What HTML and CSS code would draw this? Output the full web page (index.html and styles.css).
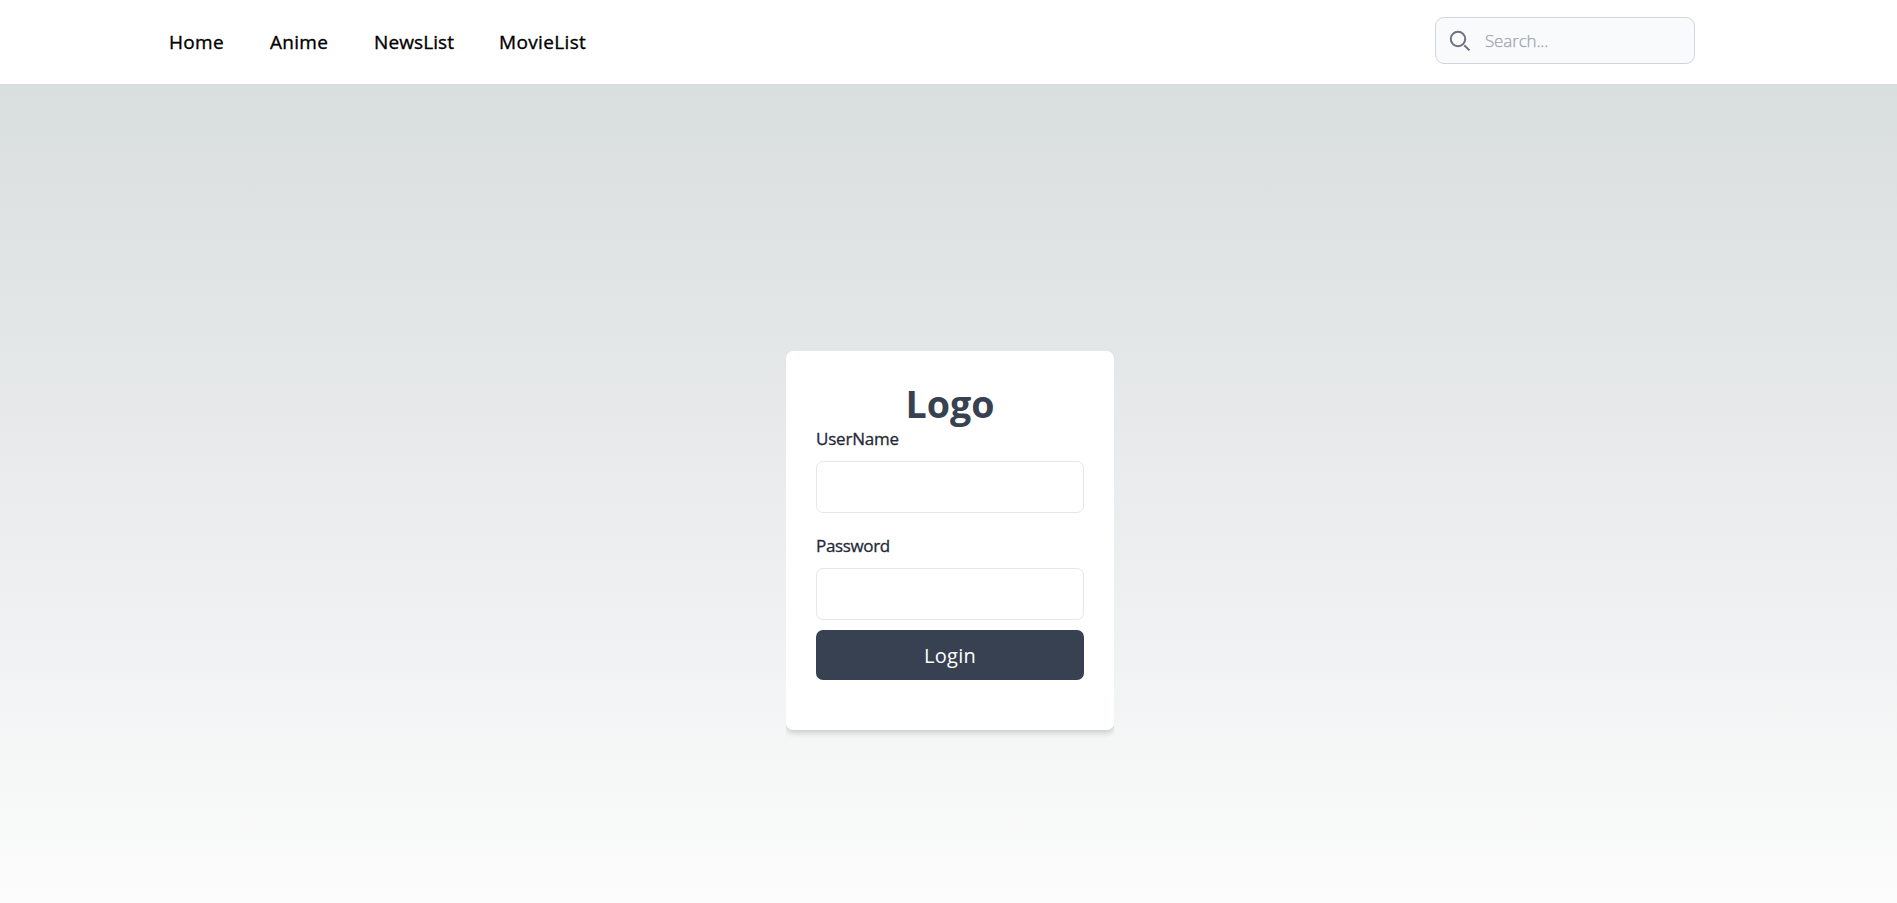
FILE: index.html
```html
<!DOCTYPE html>
<html lang="en">
<head>
<meta charset="utf-8">
<title>Login</title>
<link rel="stylesheet" href="styles.css">
</head>
<body>
<header class="header">
  <nav class="nav">
    <a class="nav-link home">Home</a>
    <a class="nav-link anime">Anime</a>
    <a class="nav-link news">NewsList</a>
    <a class="nav-link movie">MovieList</a>
  </nav>
  <label class="search">
    <svg class="search-icon" viewBox="0 0 22 22" fill="none" stroke="#6b7280" stroke-width="2"><circle cx="9" cy="9" r="7.2"/><path d="M15.2 15.2l5.3 5.2"/></svg>
    <input class="search-input" type="text" placeholder="Search...">
  </label>
</header>
<main class="main">
  <form class="card">
    <h1 class="logo">Logo</h1>
    <label class="label" for="user">UserName</label>
    <input class="field" id="user" type="text">
    <label class="label second" for="pass">Password</label>
    <input class="field" id="pass" type="password">
    <button class="button" type="button">Login</button>
  </form>
</main>
</body>
</html>
```
FILE: styles.css
```css
* { box-sizing: border-box; margin: 0; }
body {
  height: 903px;
  display: flex;
  flex-direction: column;
  overflow: hidden;
  font-family: "Open Sans", "Noto Sans", sans-serif;
}
.header {
  height: 84px;
  flex: none;
  display: flex;
  align-items: center;
  justify-content: space-between;
  padding: 0 202px 3px 169px;
  background: #fff;
}
.nav { display: flex; gap: 45px; padding-top: 3px; }
.nav-link {
  font-size: 19px;
  font-weight: 500;
  line-height: 28px;
  color: #000;
  white-space: nowrap;
  -webkit-text-stroke: .35px #000;
}
.home { width: 56px; letter-spacing: .3px; }
.anime { width: 59px; letter-spacing: .3px; }
.news { width: 80px; letter-spacing: .1px; }
.movie { width: 90px; letter-spacing: .35px; }
.search {
  width: 260px;
  height: 47px;
  display: flex;
  align-items: center;
  gap: 14px;
  padding: 1px 13px 0;
  border: 1px solid #d1d5db;
  border-radius: 9px;
  background: #f9fafb;
}
.search-icon { width: 22px; height: 22px; flex: none; margin-top: -1px; }
.search-input {
  flex: 1;
  min-width: 0;
  padding: 0;
  border: 0;
  outline: 0;
  background: transparent;
  font: 300 17px/24px "Open Sans", sans-serif;
  letter-spacing: -.15px;
}
.search-input::placeholder { color: #9ca3af; opacity: 1; -webkit-text-stroke: .25px #9ca3af; }
.main {
  flex: 1;
  display: flex;
  justify-content: center;
  align-items: flex-start;
  padding: 267px 0 0 3px;
  background: linear-gradient(#d9dede, #eaeced 50%, #fcfcfc);
}
.card {
  width: 328px;
  height: 379px;
  padding: 31px 30px 0;
  display: flex;
  flex-direction: column;
  border-radius: 7px;
  background: #fff;
  box-shadow: 0 4px 6px rgba(0, 0, 0, .09), 0 2px 5px rgba(0, 0, 0, .09);
  clip-path: inset(0 0 -16px 0);
}
.logo { height: 45px; font-size: 37.6px; line-height: 44px; font-weight: 700; text-align: center; color: #374151; }
.label {
  height: 24px;
  margin-bottom: 10px;
  font-size: 17px;
  line-height: 24px;
  font-weight: 500;
  letter-spacing: -.2px;
  color: #1f2937;
  -webkit-text-stroke: .3px #1f2937;
}
.second { margin-top: 21px; letter-spacing: -.35px; }
.field { width: 268px; height: 52px; border: 1px solid #e5e7eb; border-radius: 7px; background: #fff; }
.button {
  height: 50px;
  margin-top: 10px;
  padding-top: 2px;
  border: 0;
  border-radius: 7px;
  background: #374151;
  color: #fff;
  font: 400 20px/28px "Open Sans", sans-serif;
  letter-spacing: .3px;
}
```
